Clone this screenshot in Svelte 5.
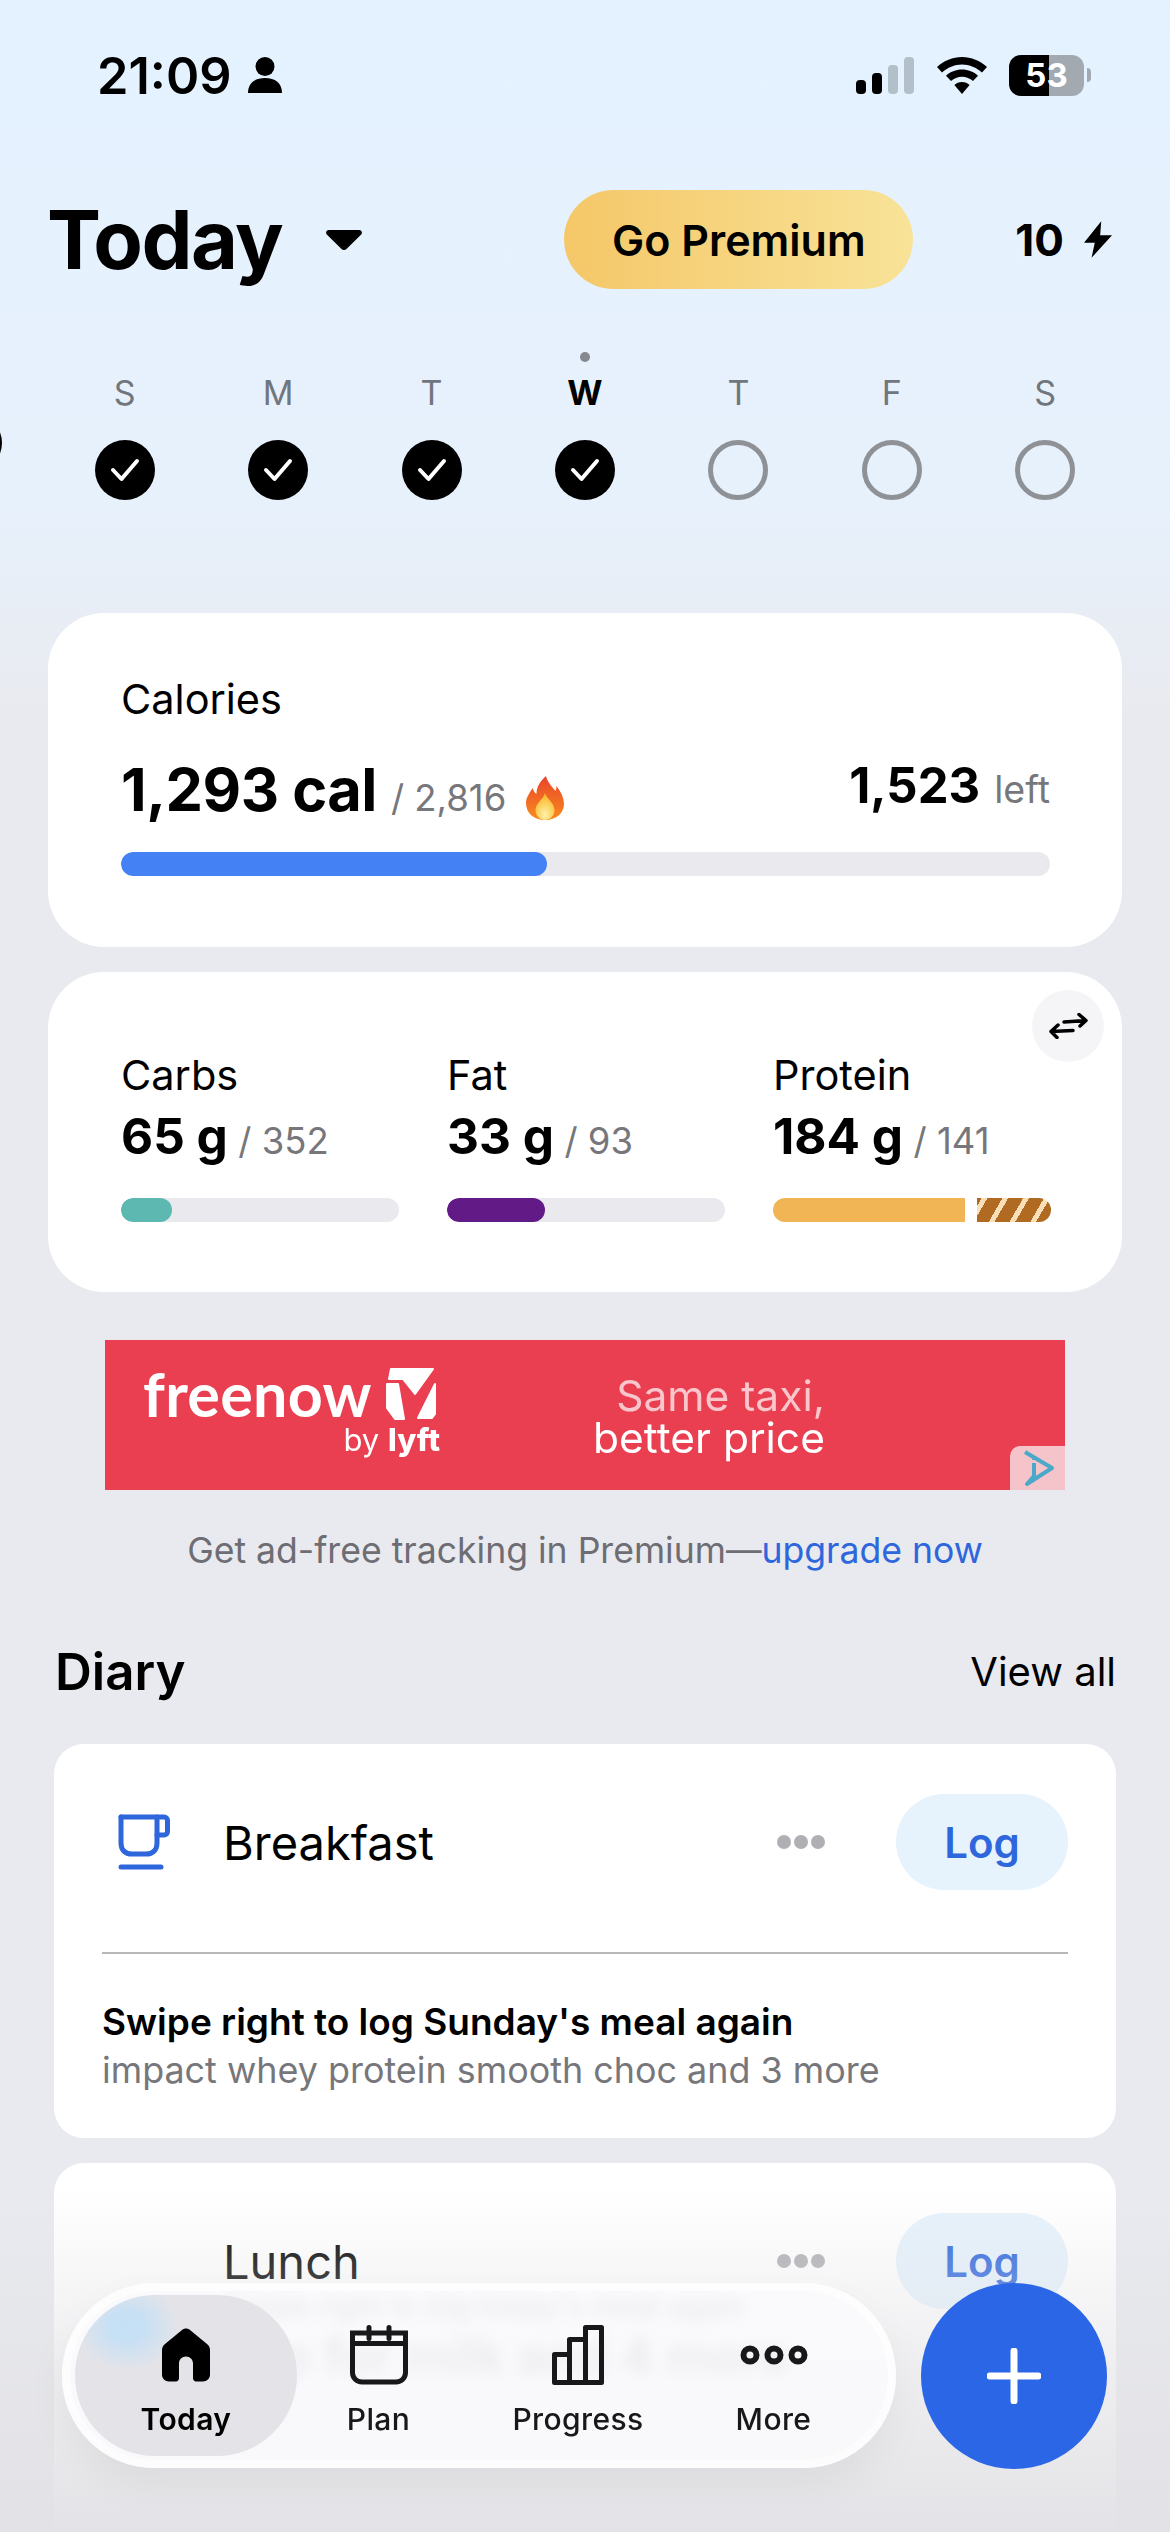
<script>
  const days = [
    { label: "S", done: true },
    { label: "M", done: true },
    { label: "T", done: true },
    { label: "W", done: true, today: true },
    { label: "T" },
    { label: "F" },
    { label: "S" },
  ];
  const macros = [
    { name: "Carbs", value: "65 g", goal: "/ 352", width: 51, color: "#5cb8b0" },
    { name: "Fat", value: "33 g", goal: "/ 93", width: 98, color: "#621a87" },
    { name: "Protein", value: "184 g", goal: "/ 141", width: 192, color: "#f2b556", over: true },
  ];
</script>

<div class="page">
  <header class="status">
    <div class="time">
      <span>21:09</span>
      <svg width="34" height="36" viewBox="0 0 34 36"><circle cx="17" cy="9.5" r="9.5" /><path d="M0 36c0-10 7-15 17-15s17 5 17 15z" /></svg>
    </div>
    <div class="sys">
      <svg width="58" height="37" viewBox="0 0 58 37">
        <rect x="0" y="23" width="10" height="14" rx="4" fill="#000" />
        <rect x="16" y="16" width="10" height="21" rx="4" fill="#000" />
        <rect x="32" y="8" width="10" height="29" rx="4" fill="#b4c0c9" />
        <rect x="48" y="0" width="10" height="37" rx="4" fill="#b4c0c9" />
      </svg>
      <svg class="wifi" width="50" height="37" viewBox="0 0 50 37">
        <path d="M25 0C15.500 0 7 3.700 0 10l5 5.500C10.500 10.500 17.500 7.500 25 7.500s14.500 3 20 8L50 10C43 3.700 34.500 0 25 0z" />
        <path d="M25 12.500c-6.200 0-11.800 2.300-16 6.200l5 5.300c3-2.700 6.800-4.300 11-4.300s8 1.600 11 4.300l5-5.300c-4.200-3.900-9.800-6.200-16-6.200z" />
        <path d="M25 25c-3 0-5.600 1.100-7.600 2.900L25 37l7.600-9.100C30.600 26.100 28 25 25 25z" />
      </svg>
      <div class="battery"><span>53</span></div>
      <i class="cap"></i>
    </div>
  </header>

  <section class="head">
    <h1>Today</h1>
    <svg class="caret" width="36" height="20" viewBox="0 0 36 20"><path d="M3 0h30c2.500 0 3.800 2.600 2.200 4.600L20.500 19c-1.300 1.300-3.700 1.300-5 0L.8 4.600C-.8 2.600.5 0 3 0z" /></svg>
    <button class="premium">Go Premium</button>
    <div class="energy">
      <span>10</span>
      <svg width="28" height="37" viewBox="0 0 26 34"><path d="M16 0 0 20h10L7 34l19-21H15z" /></svg>
    </div>
  </section>

  <section class="week">
    <i class="peek left"></i>
    <i class="peek right"></i>
    {#each days as day}
      <div class="day" class:today={day.today}>
        <i class="dot"></i>
        <span>{day.label}</span>
        {#if day.done}
          <div class="mark done">
            <svg width="32" height="26" viewBox="0 0 32 26"><path d="M4 13l8.500 9L28 4" fill="none" stroke="#fff" stroke-width="4" stroke-linecap="round" stroke-linejoin="round" /></svg>
          </div>
        {:else}
          <div class="mark"></div>
        {/if}
      </div>
    {/each}
  </section>

  <section class="card calories">
    <div class="label">Calories</div>
    <div class="cal-row">
      <div class="cal-main">
        <strong>1,293 cal</strong>
        <span class="goal">/ 2,816</span>
        <svg class="flame" width="38" height="44" viewBox="0 0 40 44" preserveAspectRatio="none">
          <defs>
            <linearGradient id="fl" x1="0" y1="0" x2="0" y2="1"><stop offset="0" stop-color="#e8452a" /><stop offset="1" stop-color="#f98b1d" /></linearGradient>
            <radialGradient id="fc" cx=".5" cy=".8" r=".7"><stop offset="0" stop-color="#fff2a8" /><stop offset="1" stop-color="#fbb92b" /></radialGradient>
          </defs>
          <path d="M21 0c2 7 6 10 10 15 1-2 1-4 1-5 5 6 8 12 8 18 0 9-8 16-20 16S0 37 0 27c0-6 4-10 7-15 1 3 2 5 4 6C11 11 15 5 21 0z" fill="url(#fl)" />
          <path d="M20 17c1 5 10 10 10 17 0 6-5 10-10 10s-10-4-10-10c0-7 8-10 10-17z" fill="url(#fc)" />
        </svg>
      </div>
      <div class="cal-left"><strong>1,523</strong> <span>left</span></div>
    </div>
    <div class="track"><div class="fill blue"></div></div>
  </section>

  <section class="card macros">
    <button class="swap" aria-label="Swap">
      <svg width="40" height="26" viewBox="0 0 40 26" fill="none" stroke="#000" stroke-width="3.500" stroke-linecap="round" stroke-linejoin="round">
        <path d="M16 9 38 7.500M31 1.500l7 6-6 5.500" />
        <path d="M25 17.500 3 18.500M10 12l-7 6.500 6 6" />
      </svg>
    </button>
    {#each macros as macro}
      <div class="macro">
        <div class="label">{macro.name}</div>
        <div class="amount"><strong>{macro.value}</strong> <span class="goal">{macro.goal}</span></div>
        {#if macro.over}
          <div class="split">
            <div class="part" style="background: {macro.color}; width: {macro.width}px"></div>
            <div class="stripes"></div>
          </div>
        {:else}
          <div class="track"><div class="fill" style="background: {macro.color}; width: {macro.width}px"></div></div>
        {/if}
      </div>
    {/each}
  </section>

  <section class="ad">
    <div class="brand">
      <div class="brand-top">
        <span class="freenow">freenow</span>
        <svg width="52" height="52" viewBox="0 0 52 52" fill="#fff" stroke="#fff" stroke-width="2" stroke-linejoin="round">
          <path d="M6 1h42L30 26 18 11H4z" />
          <path d="M2 16h11l6 35h-9L2 40z" />
          <path d="M50 16v30l-3 4H33z" />
        </svg>
      </div>
      <div class="byline">by <b>lyft</b></div>
    </div>
    <div class="slogan">
      <span class="faint">Same taxi,</span>
      <span>better price</span>
    </div>
    <div class="adchoice">
      <svg width="36" height="38" viewBox="0 0 36 38" fill="none" stroke="#4aa8c8" stroke-width="4" stroke-linejoin="round"><path d="M5 3 32 19 7 35 14 27V14" /><path d="M14 10v1" /></svg>
    </div>
  </section>

  <p class="upsell">Get ad-free tracking in Premium—<span>upgrade now</span></p>

  <div class="diary-head">
    <h2>Diary</h2>
    <span>View all</span>
  </div>

  <section class="meal breakfast">
    <div class="meal-row">
      <svg class="cup" width="52" height="56" viewBox="0 0 52 56" fill="none" stroke="#2e66dc" stroke-width="5" stroke-linecap="round" stroke-linejoin="round">
        <path d="M3 3h43c2 0 3.500 1.500 3.500 3.500v11c0 2-1.500 3.500-3.500 3.500h-7" />
        <path d="M3 3v26c0 7 4 11 11 11h14c7 0 11-4 11-11V3" />
        <path d="M3 53h40" />
      </svg>
      <span class="meal-name">Breakfast</span>
      <div class="dots"><i></i><i></i><i></i></div>
      <button class="log">Log</button>
    </div>
    <div class="suggestion">
      <strong>Swipe right to log Sunday's meal again</strong>
      <span>impact whey protein smooth choc and 3 more</span>
    </div>
  </section>

  <section class="meal lunch">
    <div class="meal-row">
      <i class="cup-blank"></i>
      <span class="meal-name">Lunch</span>
      <div class="dots"><i></i><i></i><i></i></div>
      <button class="log">Log</button>
    </div>
    <div class="behind">
      <span>Swipe right to log today's meal again</span>
      <strong>Tap for milk and 4 more</strong>
    </div>
  </section>

  <div class="fade"></div>

  <nav class="tabs">
    <div class="tab active">
      <svg width="48" height="53" viewBox="0 0 48 53"><path d="M20 1.500c2.300-2 5.700-2 8 0L45 15.500c2 1.600 3 3.500 3 6V46c0 4-3 7-7 7h-7c-1.500 0-3-1.500-3-3V35c0-4-3-7-7-7s-7 3-7 7v15c0 1.500-1.500 3-3 3H7c-4 0-7-3-7-7V21.500c0-2.500 1-4.400 3-6z" /></svg>
      <span>Today</span>
    </div>
    <div class="tab">
      <svg width="58" height="59" viewBox="0 0 58 59" fill="none" stroke="#18181b" stroke-width="5">
        <path d="M2.500 7.500h53V47c0 5.500-4 9.500-9.500 9.500H12c-5.500 0-9.500-4-9.500-9.500z" />
        <path d="M2.500 18h53" />
        <path d="M19 2v11M39 2v11" stroke-linecap="round" />
      </svg>
      <span>Plan</span>
    </div>
    <div class="tab">
      <svg width="52" height="60" viewBox="0 0 52 60" fill="none" stroke="#18181b" stroke-width="5" stroke-linejoin="round">
        <path d="M2.500 29.500h15v28h-15z" />
        <path d="M17.500 14.500h16v43h-16z" />
        <path d="M33.500 2.500h16v55h-16z" />
      </svg>
      <span>Progress</span>
    </div>
    <div class="tab">
      <svg width="68" height="60" viewBox="0 0 68 60" fill="none" stroke="#18181b" stroke-width="6">
        <circle cx="10" cy="30" r="6.500" /><circle cx="34" cy="30" r="6.500" /><circle cx="58" cy="30" r="6.500" />
      </svg>
      <span>More</span>
    </div>
  </nav>

  <button class="fab" aria-label="Add">
    <svg width="54" height="56" viewBox="0 0 54 56" stroke="#fff" stroke-width="7" stroke-linecap="round"><path d="M27 3v50M3 28h48" /></svg>
  </button>
</div>

<style>
  :global(body) {
    margin: 0;
    background: #e9eaef;
  }

  .page {
    position: relative;
    width: 1170px;
    height: 2532px;
    overflow: hidden;
    font-family: Inter, "Liberation Sans", sans-serif;
    color: #000;
    background: linear-gradient(to bottom, #e4f2ff 0, #e7f1fc 500px, #e9eaef 720px);
  }

  button {
    border: 0;
    font-family: inherit;
    padding: 0;
  }

  i {
    display: block;
  }

  .status {
    display: flex;
    justify-content: space-between;
    align-items: center;
    height: 100px;
    padding: 50px 79px 0 97px;
    box-sizing: border-box;
  }

  .time {
    display: flex;
    align-items: center;
    gap: 16px;
    font-size: 50.500px;
    font-weight: 600;
  }

  .sys {
    display: flex;
    align-items: center;
    height: 50px;
  }

  .wifi {
    margin-left: 23px;
  }

  .battery {
    margin-left: 22px;
    width: 75px;
    height: 41px;
    border-radius: 12px;
    background: linear-gradient(to right, #000 53%, #a2a9b1 53%);
    display: flex;
    align-items: center;
    justify-content: center;
    color: #fff;
    font-size: 33px;
    font-weight: 700;
  }

  .cap {
    width: 4px;
    height: 14px;
    margin-left: 3px;
    background: #a2a9b1;
    border-radius: 0 4px 4px 0;
  }

  .head {
    display: flex;
    align-items: center;
    height: 99px;
    margin-top: 90px;
    padding-left: 47px;
  }

  h1 {
    margin: 0;
    font-size: 81px;
    font-weight: 700;
    letter-spacing: -1.500px;
  }

  .caret {
    margin-left: 44px;
  }

  .premium {
    width: 349px;
    height: 99px;
    margin-left: auto;
    border-radius: 50px;
    background: linear-gradient(to right, #f5c768, #f8e398);
    color: #000;
    font-size: 43px;
    font-weight: 600;
  }

  .energy {
    display: flex;
    align-items: center;
    gap: 20px;
    margin: 0 58px 0 102px;
    font-size: 44px;
    font-weight: 700;
  }

  .week {
    position: relative;
    display: grid;
    grid-template-columns: repeat(7, 1fr);
    margin: 0 48px;
    padding-top: 63px;
  }

  .day {
    display: flex;
    flex-direction: column;
    align-items: center;
    font-size: 34px;
    line-height: 40px;
    color: #71757c;
  }

  .day .dot {
    width: 10px;
    height: 10px;
    border-radius: 50%;
    margin-bottom: 11px;
  }

  .day.today {
    color: #000;
    font-weight: 700;
  }

  .day.today .dot {
    background: #85888f;
  }

  .mark {
    box-sizing: border-box;
    width: 60px;
    height: 60px;
    margin-top: 27px;
    border-radius: 50%;
    border: 5px solid #8e9196;
    display: flex;
    align-items: center;
    justify-content: center;
  }

  .mark.done {
    background: #000;
    border: 0;
  }

  .peek {
    position: absolute;
    top: 124px;
    width: 60px;
    height: 60px;
    border-radius: 50%;
    box-sizing: border-box;
  }

  .peek.left {
    left: -106px;
    background: #000;
  }

  .peek.right {
    right: -108px;
    border: 5px solid #8e9196;
  }

  .card {
    background: #fff;
    border-radius: 56px;
    margin: 0 48px;
    box-sizing: border-box;
    padding: 0 72px 0 73px;
  }

  .label {
    font-size: 41.500px;
    line-height: 50px;
  }

  .goal {
    color: #77777b;
    font-size: 36.500px;
    font-weight: 400;
  }

  .track {
    height: 24px;
    border-radius: 12px;
    background: #e9e9ee;
    overflow: hidden;
  }

  .fill {
    height: 100%;
    border-radius: 12px;
  }

  .fill.blue {
    width: 426px;
    background: #4381f5;
  }

  .calories {
    height: 334px;
    margin-top: 113px;
    padding-top: 61px;
  }

  .cal-row {
    display: flex;
    justify-content: space-between;
    align-items: flex-start;
    height: 76px;
    margin-top: 27px;
    margin-bottom: 25px;
  }

  .cal-main {
    display: flex;
    align-items: baseline;
    gap: 14px;
    line-height: 76px;
  }

  .cal-main strong {
    font-size: 59.500px;
    font-weight: 700;
    letter-spacing: -.5px;
  }

  .flame {
    align-self: center;
    margin: 8px 0 0 6px;
  }

  .cal-left {
    display: flex;
    align-items: baseline;
    gap: 14px;
    margin-top: 5px;
    line-height: 60px;
  }

  .cal-left strong {
    font-size: 49px;
    font-weight: 700;
  }

  .cal-left span {
    color: #77777b;
    font-size: 37.500px;
  }

  .macros {
    position: relative;
    display: grid;
    grid-template-columns: repeat(3, 278px);
    column-gap: 48px;
    height: 320px;
    margin-top: 25px;
    padding-top: 78px;
  }

  .swap {
    position: absolute;
    top: 18px;
    right: 18px;
    width: 72px;
    height: 72px;
    border-radius: 50%;
    background: #f5f5f8;
    display: flex;
    align-items: center;
    justify-content: center;
  }

  .amount {
    line-height: 60px;
    margin-top: 6px;
    margin-bottom: 20px;
    white-space: nowrap;
  }

  .amount strong {
    font-size: 49.500px;
    font-weight: 700;
  }

  .amount .goal {
    margin-left: 6px;
  }

  .split {
    display: flex;
    justify-content: space-between;
    height: 24px;
  }

  .part {
    border-radius: 12px 0 0 12px;
  }

  .stripes {
    width: 74px;
    border-radius: 0 12px 12px 0;
    background: repeating-linear-gradient(-60deg, #b06a22 0, #b06a22 13px, #f9dfb8 13px, #f9dfb8 18px);
  }

  .ad {
    position: relative;
    display: flex;
    height: 150px;
    margin: 48px 105px 0;
    background: #e93f50;
    color: #fff;
  }

  .brand {
    margin: 28px 0 0 38px;
    width: 297px;
  }

  .brand-top {
    display: flex;
    align-items: center;
    gap: 13px;
    filter: blur(.5px);
  }

  .freenow {
    font-family: Lato, sans-serif;
    font-size: 61px;
    font-weight: 700;
    line-height: 52px;
    letter-spacing: .3px;
  }

  .byline {
    text-align: right;
    font-size: 31px;
    line-height: 36px;
    margin-top: 2px;
    filter: blur(.4px);
  }

  .byline b {
    font-weight: 800;
  }

  .slogan {
    display: flex;
    flex-direction: column;
    align-items: flex-end;
    margin: 35px 0 0 153px;
    font-size: 42.500px;
    line-height: 42px;
    filter: blur(.4px);
  }

  .slogan .faint {
    color: #f9c6cc;
  }

  .adchoice {
    position: absolute;
    right: 0;
    bottom: 0;
    width: 55px;
    height: 44px;
    border-radius: 10px 0 0 0;
    background: #f5c4cb;
    display: flex;
    align-items: center;
    justify-content: center;
  }

  .upsell {
    margin: 37px 0 0;
    text-align: center;
    font-size: 35.600px;
    line-height: 48px;
    color: #6d6d73;
  }

  .upsell span {
    color: #2e66dc;
  }

  .diary-head {
    display: flex;
    justify-content: space-between;
    align-items: center;
    height: 60px;
    margin: 66px 54px 0 55px;
  }

  h2 {
    margin: 0;
    font-size: 51px;
    font-weight: 600;
  }

  .diary-head span {
    font-size: 40px;
  }

  .meal {
    margin: 43px 54px 0;
    background: #fff;
    border-radius: 30px;
    box-sizing: border-box;
    padding: 0 48px;
  }

  .breakfast {
    height: 394px;
  }

  .lunch {
    height: 500px;
    margin-top: 25px;
  }

  .meal-row {
    display: flex;
    align-items: center;
    height: 196px;
    padding-bottom: 12px;
    border-bottom: 2px solid #b8b8b8;
  }

  .lunch .meal-row {
    border-bottom: 0;
  }

  .cup,
  .cup-blank {
    width: 52px;
    margin: 0 53px 0 16px;
  }

  .meal-name {
    font-size: 47px;
  }

  .dots {
    display: flex;
    gap: 3px;
    margin-left: auto;
  }

  .dots i {
    width: 14px;
    height: 14px;
    border-radius: 50%;
    background: #b0b0b4;
  }

  .log {
    width: 172px;
    height: 96px;
    margin-left: 71px;
    border-radius: 48px;
    background: #e6f2fc;
    color: #2e66dc;
    font-size: 42px;
    font-weight: 600;
  }

  .suggestion {
    display: flex;
    flex-direction: column;
    margin-top: 44px;
    font-size: 35.900px;
    line-height: 48px;
    color: #77777b;
  }

  .suggestion strong {
    color: #000;
    font-size: 37px;
    font-weight: 600;
  }

  .behind {
    display: flex;
    flex-direction: column;
    margin: -85px 0 0 120px;
    color: #000;
  }

  .behind span {
    font-size: 30px;
    line-height: 40px;
  }

  .behind strong {
    font-size: 50px;
    line-height: 60px;
    font-weight: 600;
  }

  .fade {
    position: absolute;
    left: 0;
    right: 0;
    top: 2190px;
    bottom: 0;
    background: linear-gradient(to bottom, rgba(226, 226, 230, 0), rgba(226, 226, 230, .5) 45%, rgba(226, 226, 230, .96));
  }

  .tabs {
    position: absolute;
    left: 62px;
    top: 2283px;
    width: 834px;
    height: 185px;
    box-sizing: border-box;
    padding: 12px 12px 12px 13px;
    border-radius: 93px;
    display: grid;
    grid-template-columns: 222px 163px 236px 155px;
    background: rgba(250, 250, 253, .88);
    backdrop-filter: blur(7px);
    box-shadow: inset 0 0 0 8px rgba(255, 255, 255, .6), 0 18px 40px rgba(0, 0, 0, .05);
  }

  .tab {
    display: flex;
    flex-direction: column;
    align-items: center;
    color: #18181b;
    font-size: 30px;
    font-weight: 500;
    letter-spacing: .4px;
  }

  .tab svg {
    height: 60px;
    margin-top: 30px;
  }

  .tab span {
    margin-top: 16px;
    line-height: 36px;
  }

  .tab.active {
    border-radius: 80px;
    background: radial-gradient(ellipse 52px 44px at 52px 32px, #c4e0f6 0, #c8e0f4 35%, rgba(200, 224, 244, 0) 100%), #e4e4e8;
    color: #000;
    font-weight: 600;
  }

  .fab {
    position: absolute;
    left: 921px;
    top: 2283px;
    width: 186px;
    height: 186px;
    border-radius: 50%;
    background: #2b66e6;
    display: flex;
    align-items: center;
    justify-content: center;
  }
</style>
